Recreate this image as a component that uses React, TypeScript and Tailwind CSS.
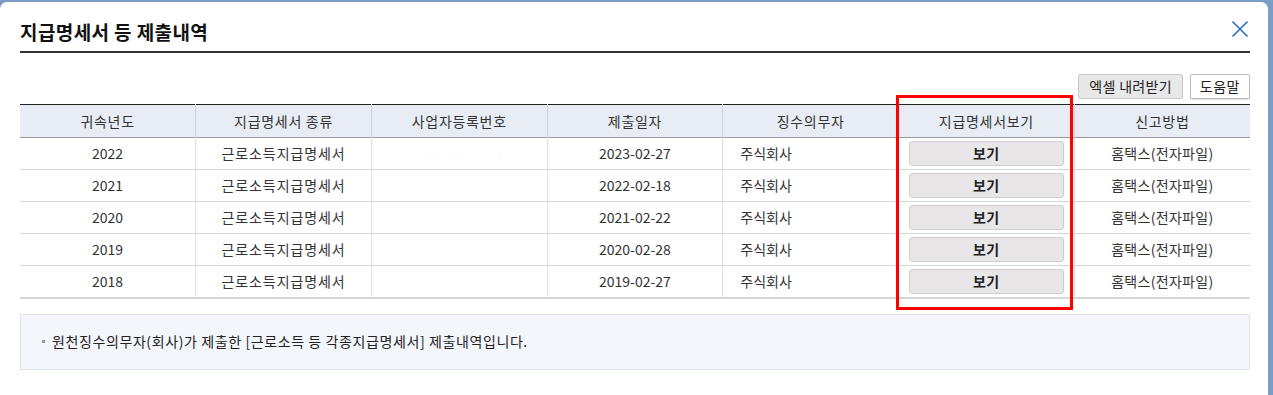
const rows = [
  { year: "2022", date: "2023-02-27" },
  { year: "2021", date: "2022-02-18" },
  { year: "2020", date: "2021-02-22" },
  { year: "2019", date: "2020-02-28" },
  { year: "2018", date: "2019-02-27" },
];

const headers = [
  "귀속년도",
  "지급명세서 종류",
  "사업자등록번호",
  "제출일자",
  "징수의무자",
  "지급명세서보기",
  "신고방법",
];

export default function App() {
  return (
    <div
      className="h-[395px] w-[1273px] overflow-hidden bg-[#7b9cc8] pt-[2px] pr-[5px]"
      style={{ fontFamily: '"Noto Sans CJK KR", "Noto Sans", sans-serif' }}
    >
      <div className="relative h-[400px] rounded-t-[7px] bg-white pl-[20px] pr-[18px]">
        {/* close */}
        <button className="absolute right-[19px] top-[18px] flex h-[18px] w-[18px] items-center justify-center">
          <svg width="18" height="18" viewBox="0 0 18 18">
            <path d="M1.5 1.5 L16.5 16.5 M16.5 1.5 L1.5 16.5" stroke="#2e6fc0" strokeWidth="1.6" fill="none" />
          </svg>
        </button>

        <div className="border-b-2 border-[#333] pt-[17px] pb-[6px]">
          <h2 className="text-[19px] font-bold leading-[26px] tracking-[0.4px] text-[#111]">지급명세서 등 제출내역</h2>
        </div>

        <div className="mt-[21px] mb-[5px] flex h-[25px] justify-end gap-[7px]">
          <button className="rounded-[2px] border border-[#c9c9c9] bg-[#e8e8e8] px-[10px] text-[14px] leading-[23px] tracking-[0.3px] text-[#222]">
            엑셀 내려받기
          </button>
          <button className="rounded-[2px] border border-[#bdbdbd] bg-white px-[9px] text-[14px] leading-[23px] tracking-[0.5px] text-[#222] shadow-[0_1px_1px_rgba(0,0,0,0.12)]">
            도움말
          </button>
        </div>

        <div className="relative">
          <table className="w-full table-fixed border-collapse text-[14px] text-[#333]">
            <thead>
              <tr className="h-[33px] border-t border-b border-t-[#222] border-b-[#9a9a9a] bg-[#e8edf5]">
                {headers.map((h, i) => (
                  <th
                    key={h}
                    className={`font-normal tracking-[0.7px] ${i < headers.length - 1 ? "border-r border-[#cfd4dc]" : ""}`}
                  >
                    {h}
                  </th>
                ))}
              </tr>
            </thead>
            <tbody>
              {rows.map((r, idx) => (
                <tr
                  key={r.year}
                  className={`h-[32px] ${idx === rows.length - 1 ? "border-b-2 border-[#d3d7dd]" : "border-b border-[#d3d8df]"}`}
                >
                  <td className="border-r border-[#dde1e6] text-center">{r.year}</td>
                  <td className="border-r border-[#dde1e6] text-center tracking-[0.9px]">근로소득지급명세서</td>
                  <td className="border-r border-[#dde1e6] text-center">
                    {idx === 0 && <span className="text-[11px] tracking-[3px] text-[#f4f4f4]">···· ·· ·····</span>}
                  </td>
                  <td className="border-r border-[#dde1e6] text-center">{r.date}</td>
                  <td className="border-r border-[#dde1e6] pl-[17px] text-left">주식회사</td>
                  <td className="border-r border-[#dde1e6] px-[10px]">
                    <button className="flex h-[25px] w-full items-center justify-center rounded-[3px] border border-[#cfcfcf] bg-[#e8e6e6] text-[14px] font-semibold tracking-[0.5px] text-[#222]">
                      보기
                    </button>
                  </td>
                  <td className="text-center tracking-[0.3px]">홈택스(전자파일)</td>
                </tr>
              ))}
            </tbody>
          </table>
          <div className="pointer-events-none absolute left-[876px] top-[-9px] h-[215px] w-[177px] border-[3px] border-[#ff0000]" />
        </div>

        <div className="mt-[15px] flex h-[56px] items-center border border-[#dfe4ea] bg-[#f3f6fb] pl-[21px] text-[14px] tracking-[0.6px] text-[#222]">
          <span className="mr-[7px] inline-block h-[3px] w-[3px] bg-[#999]" />
          원천징수의무자(회사)가 제출한 [근로소득 등 각종지급명세서] 제출내역입니다.
        </div>
      </div>
    </div>
  );
}
